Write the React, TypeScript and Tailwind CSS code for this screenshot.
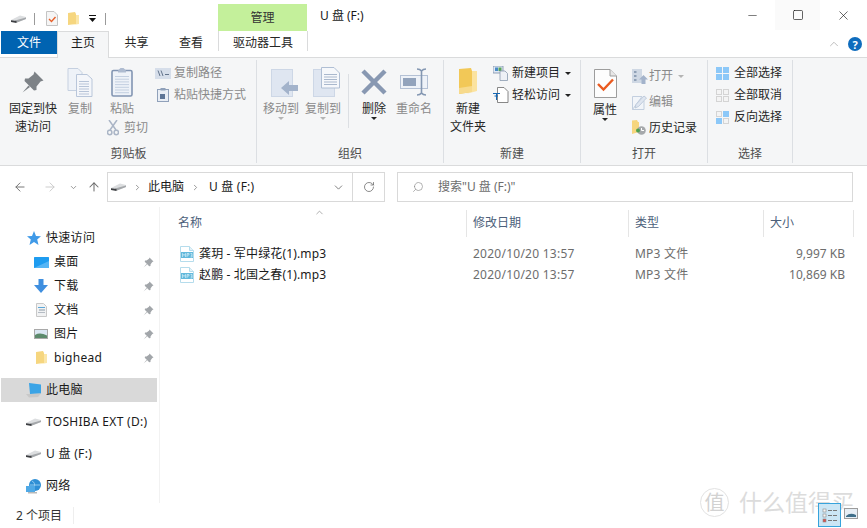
import type { ReactNode } from 'react'
import { Minus, Square, X, ChevronUp, ChevronDown, ChevronRight, ArrowLeft, ArrowRight, ArrowUp, RotateCw, Search } from 'lucide-react'

const FONT = "font-['Noto_Sans','Noto_Sans_CJK_SC',sans-serif]"

type IconProps = { className?: string }

function Drive({ className }: IconProps) {
  return (
    <svg className={className} width="15" height="8" viewBox="0 0 15 8">
      <path d="M0 5 L9 .5 L15 2 L15 4 L6 7.5 L0 6.5 Z" fill="#dcdee0" />
      <path d="M4 5.5 L15 2.6 L15 4 L6 7.5 L4 7.2 Z" fill="#a4a7aa" />
      <path d="M0 5.2 L5.5 6 L5.5 8 L0 7 Z" fill="#3d3f42" />
    </svg>
  )
}

function FolderSmall({ className }: IconProps) {
  return (
    <svg className={className} width="11" height="14" viewBox="0 0 11 14">
      <path d="M0 1 L7 0 L8 2 L8 12 L0 13 Z" fill="#f6d67f" />
      <path d="M8 3 L11 3 L11 12 L2 13.5 L8 12 Z" fill="#fbe6a8" />
    </svg>
  )
}

function Pin({ className, color = '#a2a6aa' }: IconProps & { color?: string }) {
  return (
    <svg className={className} width="11" height="11" viewBox="0 0 22 22">
      <path d="M13 1 L21 9 L18.5 10 L15 15 L15 18 L12.5 18.5 L3.5 9.5 L4 7 L7 7 L12 3.5 Z" fill={color} />
      <path d="M7 14 L1 21 L8 15 Z" fill={color} />
    </svg>
  )
}

function PinLarge() {
  return (
    <svg width="22" height="22" viewBox="0 0 22 22">
      <path d="M12.5 0.5 L21.5 9.5 L18.5 10.5 L14.5 15.5 L14.5 19 L12 19.5 L2.5 10 L3 7.5 L6.5 7.5 L11.5 3.5 Z" fill="#7d8287" />
      <path d="M6.5 14.5 L0.5 21.5 L8 16 Z" fill="#7d8287" />
    </svg>
  )
}

function Lines({ x, y, w, n, gap = 2.5, color = '#b7c4d8' }: { x: number; y: number; w: number; n: number; gap?: number; color?: string }) {
  return (
    <>
      {Array.from({ length: n }).map((_, i) => (
        <rect key={i} x={x} y={y + i * gap} width={w} height="1" fill={color} />
      ))}
    </>
  )
}

function CopyIcon() {
  return (
    <svg width="26" height="29" viewBox="0 0 26 29">
      <path d="M1 .5 H11 L15 4.5 V22.5 H1 Z" fill="#eef2f8" stroke="#c5d0e0" />
      <path d="M9.5 6.5 H20 L25 11 V28.5 H9.5 Z" fill="#f4f6fa" stroke="#b9c6da" />
      <Lines x={12} y={13} w={10} n={6} />
    </svg>
  )
}

function PasteIcon() {
  return (
    <svg width="22" height="30" viewBox="0 0 22 30">
      <rect x="1" y="3.5" width="20" height="25.5" rx="1.5" fill="#eef2f8" stroke="#8295b2" strokeWidth="1.6" />
      <path d="M7 3.5 L9.5 1 H12.5 L15 3.5 V5.5 H7 Z" fill="#aebbd0" />
      <Lines x={4} y={9} w={14} n={7} gap={2.7} color="#c3cfe0" />
    </svg>
  )
}

function ScissorsIcon() {
  return (
    <svg width="12" height="16" viewBox="0 0 12 16" fill="none" stroke="#aab5c6" strokeWidth="1.5">
      <path d="M2 0 L9 10 M10 0 L3 10" />
      <circle cx="2.7" cy="12.5" r="2.2" />
      <circle cx="9.3" cy="12.5" r="2.2" />
    </svg>
  )
}

function CopyPathIcon() {
  return (
    <svg width="16" height="11" viewBox="0 0 16 11">
      <rect width="16" height="11" fill="#d6deea" />
      <path d="M3 2.5 L5 8 M6 2.5 L8 8 M10 6.5 H14" stroke="#63748c" strokeWidth="1" fill="none" />
    </svg>
  )
}

function PasteShortcutIcon() {
  return (
    <svg width="12" height="14" viewBox="0 0 12 14">
      <rect x=".5" y="1.5" width="11" height="12" fill="#e9eef5" stroke="#90a1ba" />
      <rect x="3.5" y="0" width="5" height="2.5" fill="#90a1ba" />
      <rect x="3" y="6" width="5" height="5" fill="#5e7596" />
    </svg>
  )
}

function MoveIcon() {
  return (
    <svg width="27" height="30" viewBox="0 0 27 30">
      <rect x=".5" y="2.5" width="21" height="27" fill="#dfe6f1" stroke="#cdd7e6" />
      <path d="M10 21 L18 14 V18 H27 V24 H18 V28 Z" fill="#a3b3cb" />
    </svg>
  )
}

function CopyToIcon() {
  return (
    <svg width="27" height="30" viewBox="0 0 27 30">
      <rect x=".5" y="2.5" width="21" height="27" fill="#dfe6f1" stroke="#cdd7e6" />
      <path d="M8.5 .5 H21 L26.5 6 V21 H8.5 Z" fill="#f6f8fb" stroke="#b0bfd4" />
      <Lines x={11} y={7} w={13} n={5} color="#a9b8cd" />
    </svg>
  )
}

function RenameIcon() {
  return (
    <svg width="29" height="28" viewBox="0 0 29 28">
      <rect x=".5" y="7.5" width="27" height="13" fill="#eef2f8" stroke="#b4c1d5" />
      <rect x="3" y="10" width="13" height="8" fill="#92a3bc" />
      <path d="M17 1 Q20 1 21.5 3 Q23 1 26 1 M17 27 Q20 27 21.5 25 Q23 27 26 27 M21.5 3 V25" fill="none" stroke="#8497b2" strokeWidth="1.6" />
    </svg>
  )
}

function FolderLarge() {
  return (
    <svg width="20" height="28" viewBox="0 0 20 28">
      <path d="M1 1 L13 0 L14 3 L14 24 L1 26 Z" fill="#f2c857" />
      <path d="M14 3 L19 3 L19 23 L4 27 L14 24 Z" fill="#fbe3a0" />
      <path d="M1 20 L14 18 V24 L1 26 Z" fill="#f7da8c" />
    </svg>
  )
}

function NewItemIcon() {
  return (
    <svg width="15" height="15" viewBox="0 0 15 15">
      <rect x="0" y="0" width="10" height="7" fill="#dfe8f3" stroke="#7b8ea8" strokeWidth=".8" />
      <rect x="2" y="1.5" width="3" height="3.5" fill="#4a8ac6" />
      <rect x="5.5" y="1.5" width="3" height="3.5" fill="#5aa55a" />
      <path d="M7 5 H12 L14.5 7.5 V14.5 H7 Z" fill="#eef1f6" stroke="#8a9ab0" strokeWidth=".8" />
    </svg>
  )
}

function EasyAccessIcon() {
  return (
    <svg width="16" height="16" viewBox="0 0 16 16">
      <path d="M4.5 .5 H11 L15 4.5 V15.5 H4.5 Z" fill="#fff" stroke="#6b6b6b" strokeWidth=".8" />
      <path d="M0 6.5 H7 M1.5 9 H5 M3.5 6.5 V13" stroke="#1467b4" strokeWidth="1" fill="none" />
    </svg>
  )
}

function PropertiesIcon() {
  return (
    <svg width="23" height="29" viewBox="0 0 23 29">
      <path d="M.5 .5 H16 L22.5 7 V28.5 H.5 Z" fill="#fdfdfd" stroke="#9d9d9d" />
      <path d="M16 .5 V7 H22.5" fill="#e7e7e7" stroke="#9d9d9d" />
      <path d="M4 15 L9.5 20.5 L19 10.5" fill="none" stroke="#ea5a20" strokeWidth="2.4" />
    </svg>
  )
}

function OpenIcon() {
  return (
    <svg width="16" height="15" viewBox="0 0 16 15">
      <rect x="0" y="0" width="10" height="14" fill="#cfd8e4" />
      <rect x="2" y="2" width="2.5" height="2" fill="#8fa0b6" />
      <rect x="2" y="6" width="2.5" height="2" fill="#8fa0b6" />
      <rect x="2" y="10" width="2.5" height="2" fill="#8fa0b6" />
      <path d="M11.5 6 L16 10.5 H13.5 V15 H9.5 V10.5 H7 Z" fill="#a3b3cb" />
    </svg>
  )
}

function EditIcon() {
  return (
    <svg width="15" height="15" viewBox="0 0 15 15">
      <path d="M.5 1.5 H10 L.5 14.5 Z M.5 14.5 H12 V6" fill="#f2f5f9" stroke="#c3cfdf" />
      <path d="M3 13 L4 9.5 L12 1 L14.5 3 L6.5 11.5 Z" fill="#dfe6f0" stroke="#b5c3d6" strokeWidth=".8" />
    </svg>
  )
}

function HistoryIcon() {
  return (
    <svg width="14" height="15" viewBox="0 0 14 15">
      <path d="M0 .5 L5 0 L6 2 H7 V12 L0 14 Z" fill="#f6d67f" />
      <circle cx="9.5" cy="10.5" r="4.3" fill="#a5a8ab" />
      <path d="M9.5 8 V10.5 H12" stroke="#fff" fill="none" />
      <circle cx="6" cy="10.5" r="2" fill="#4fa04f" />
    </svg>
  )
}

function SelectGrid({ on }: { on: boolean[] }) {
  const pos = [
    [0, 0],
    [7, 0],
    [0, 7],
    [7, 7],
  ]
  return (
    <svg width="13" height="13" viewBox="0 0 13 13">
      {pos.map(([x, y], i) =>
        on[i] ? (
          <rect key={i} x={x} y={y} width="6" height="6" fill="#8cc8f8" />
        ) : (
          <rect key={i} x={x + 0.5} y={y + 0.5} width="5" height="5" fill="#f4f4f4" stroke="#d4d4d4" />
        ),
      )}
    </svg>
  )
}

function Caret({ grey, className }: IconProps & { grey?: boolean }) {
  return (
    <svg className={className} width="6" height="3" viewBox="0 0 6 3">
      <path d="M0 0 H6 L3 3 Z" fill={grey ? '#b4b4b4' : '#222'} />
    </svg>
  )
}

function MusicFile() {
  return (
    <svg width="14" height="16" viewBox="0 0 14 16">
      <path d="M.5 .5 H9.5 L13.5 4.5 V15.5 H.5 Z" fill="#fff" stroke="#b5dcec" />
      <path d="M9.5 .5 V4.5 H13.5" fill="#e4f2f8" stroke="#b5dcec" />
      <rect x="1" y="6" width="12" height="6" fill="#62b9dc" />
      <path d="M2.5 11 V7.5 L4 9.5 L5.5 7.5 V11 M7 11 V7.5 H9 V9 H7 M10.5 7.5 H12 V11 H10.5 M10.8 9.2 H12" stroke="#e8f6fb" strokeWidth=".6" fill="none" />
    </svg>
  )
}

function Star() {
  return (
    <svg width="14" height="14" viewBox="0 0 14 14">
      <path d="M7 0 L9 5 L14 5.3 L10.2 8.6 L11.5 14 L7 11 L2.5 14 L3.8 8.6 L0 5.3 L5 5 Z" fill="#3f9ae8" />
    </svg>
  )
}

function Desktop() {
  return (
    <svg width="15" height="11" viewBox="0 0 15 11">
      <rect width="15" height="11" rx=".5" fill="#1e9cf0" />
      <path d="M0 11 L15 4 V11 Z" fill="#55b5f5" />
    </svg>
  )
}

function Download() {
  return (
    <svg width="14" height="14" viewBox="0 0 14 14">
      <path d="M4.5 0 H9.5 V6 H14 L7 14 L0 6 H4.5 Z" fill="#3f8fdf" />
    </svg>
  )
}

function Documents() {
  return (
    <svg width="11" height="14" viewBox="0 0 11 14">
      <path d="M.5 .5 H7.5 L10.5 3.5 V13.5 H.5 Z" fill="#f1f2f3" stroke="#c8c8c8" />
      <rect x="2" y="4" width="7" height="1" fill="#5ba7d8" />
      <rect x="3" y="6.5" width="6" height="1" fill="#8d99a5" />
      <rect x="2" y="9" width="7" height="1" fill="#b5bcc4" />
    </svg>
  )
}

function Pictures() {
  return (
    <svg width="14" height="10" viewBox="0 0 14 10">
      <rect width="14" height="10" fill="#a9a9a9" />
      <rect x="1" y="1" width="12" height="8" fill="#dbe7f3" />
      <path d="M1 6 Q6 3 13 6.5 V9 H1 Z" fill="#5c8a6c" />
    </svg>
  )
}

function Laptop() {
  return (
    <svg width="16" height="15" viewBox="0 0 16 15">
      <path d="M3 0 L15 1.5 V10.5 L4 11 Z" fill="#3ba4e6" />
      <path d="M0 11 L4 11 L15 10.5 L12 14 L3 14.5 Z" fill="#c8c8c8" />
    </svg>
  )
}

function Network() {
  return (
    <svg width="16" height="15" viewBox="0 0 16 15">
      <circle cx="9" cy="6" r="6" fill="#2f8fd5" />
      <path d="M6 2 Q10 4 8 9 M4 6 H14" stroke="#a8d8f5" fill="none" strokeWidth=".8" />
      <rect x="0" y="7" width="9" height="6" fill="#4fa9e6" />
      <rect x="2" y="13" width="9" height="1.5" fill="#b9b9b9" />
    </svg>
  )
}

function Big({ w, icon, lines, off, caret, className = 'pt-[2px]' }: { w: number; icon: ReactNode; lines: string[]; off?: boolean; caret?: 'dark' | 'grey'; className?: string }) {
  return (
    <div className={`flex shrink-0 flex-col items-center ${className}`} style={{ width: w }}>
      <div className="flex h-[36px] w-full items-center justify-center">{icon}</div>
      {lines.map((l) => (
        <div key={l} className={`h-[18px] whitespace-nowrap leading-[18px] ${off ? 'text-[#8a8a8a]' : 'text-[#262626]'}`}>
          {l}
        </div>
      ))}
      {caret && <Caret grey={caret === 'grey'} className="mt-[-1px]" />}
    </div>
  )
}

function Small({ icon, text, off, h = 22, iconW = 19, caret }: { icon: ReactNode; text: string; off?: boolean; h?: number; iconW?: number; caret?: 'dark' | 'grey' }) {
  return (
    <div className="flex items-center whitespace-nowrap" style={{ height: h }}>
      <div className="flex shrink-0 items-center" style={{ width: iconW }}>
        {icon}
      </div>
      <span className={off ? 'text-[#8a8a8a]' : 'text-[#262626]'}>{text}</span>
      {caret && <Caret grey={caret === 'grey'} className="ml-[5px]" />}
    </div>
  )
}

function Group({ w, label, children }: { w: number; label: string; children: ReactNode }) {
  return (
    <div className="flex h-full shrink-0 flex-col border-r border-[#dcdfe3]" style={{ width: w }}>
      <div className="flex flex-1 pt-[2px]">{children}</div>
      <div className="h-5 text-center leading-[22px] text-[#4d4d4d]">{label}</div>
    </div>
  )
}

function NavRow({ icon, label, pin, indent = 'pl-[33px]', iconW = 20, className = '' }: { icon: ReactNode; label: string; pin?: boolean; indent?: string; iconW?: number; className?: string }) {
  return (
    <div className={`flex h-6 items-center ${indent} ${className}`}>
      <div className="flex shrink-0 items-center" style={{ width: iconW }}>
        {icon}
      </div>
      <span className="whitespace-nowrap tracking-[0.3px] text-[#1a1a1a]">{label}</span>
      {pin && <Pin className="ml-auto mr-[3px]" />}
    </div>
  )
}

function FileRow({ name, size }: { name: string; size: string }) {
  return (
    <div className="flex h-[21px] items-center">
      <div className="flex w-[313px] items-center pl-[20px]">
        <MusicFile />
        <span className="ml-[5px] whitespace-nowrap tracking-[0.15px] text-[#1a1a1a]">{name}</span>
      </div>
      <div className="w-[162px] whitespace-nowrap tracking-[0.25px] text-[#6d6d6d]">2020/10/20 13:57</div>
      <div className="w-[100px] whitespace-nowrap tracking-[0.2px] text-[#6d6d6d]">MP3 文件</div>
      <div className="w-[110px] text-right text-[#6d6d6d]">{size}</div>
    </div>
  )
}

function ColHead({ w, label, first }: { w: number; label: string; first?: boolean }) {
  return (
    <div className={`flex h-full shrink-0 items-center border-r border-[#e5e5e5] pb-[2px] text-[#4c607a] ${first ? 'pl-[18px]' : 'pl-[6px]'}`} style={{ width: w }}>
      {label}
    </div>
  )
}

export default function App() {
  return (
    <div className={`relative flex h-[528px] w-[867px] flex-col overflow-hidden bg-white text-[12px] ${FONT}`}>
      {/* title bar */}
      <div className="flex h-[31px] shrink-0">
        <div className="flex items-center pt-[6px]">
          <Drive className="ml-[11px]" />
          <div className="ml-[8px] h-3 w-px bg-[#9a9a9a]" />
          <svg className="ml-[11px]" width="12" height="15" viewBox="0 0 12 15">
            <path d="M.5 .5 H8 L11.5 4 V14.5 H.5 Z" fill="#f5f5f5" stroke="#c4c4c4" />
            <path d="M3 8 L5.5 10.5 L9.5 6" fill="none" stroke="#e8602a" strokeWidth="1.4" />
          </svg>
          <FolderSmall className="ml-[10px]" />
          <svg className="ml-[10px]" width="8" height="7" viewBox="0 0 8 7">
            <rect width="7" height="1" fill="#111" />
            <path d="M0 3 H7 L3.5 7 Z" fill="#111" />
          </svg>
          <div className="ml-[8px] h-3 w-px bg-[#9a9a9a]" />
        </div>
        <div className="ml-[112px] mt-[4px] flex h-[27px] w-[89px] items-center justify-center bg-[#c4f09b] text-[#333]">管理</div>
        <div className="ml-[13px] flex items-center text-[#1a1a1a]">U 盘 (F:)</div>
        <div className="ml-auto flex h-[30px] items-center">
          <div className="flex h-[30px] w-[46px] items-center justify-center">
            <Minus size={13} strokeWidth={1} color="#111" />
          </div>
          <div className="flex h-[30px] w-[45px] items-center justify-center bg-[#fafafa]">
            <Square size={12} strokeWidth={1.3} color="#111" />
          </div>
          <div className="flex h-[30px] w-[47px] items-center justify-center">
            <X size={15} strokeWidth={1} color="#111" />
          </div>
        </div>
      </div>

      {/* tabs */}
      <div className="relative z-10 flex h-[26px] shrink-0 pl-px">
        <div className="flex h-[23px] w-[56px] items-center justify-center bg-[#0063b1] text-white">文件</div>
        <div className="flex h-[27px] w-[52px] items-center justify-center border-x border-t border-[#dadbdc] bg-[#f5f6f7] pb-[4px] text-[#1a1a1a]">主页</div>
        <div className="flex h-[23px] w-[55px] items-center justify-center text-[#262626]">共享</div>
        <div className="flex h-[23px] w-[54px] items-center justify-center text-[#262626]">查看</div>
        <div className="h-[20px] w-[90px] border-x border-[#dadbdc]">
          <div className="flex h-[23px] items-center justify-center text-[#262626]">驱动器工具</div>
        </div>
        <div className="ml-auto flex h-[26px] items-center pr-[5px]">
          <ChevronUp size={14} color="#b5b5b5" strokeWidth={1.5} />
          <div className="ml-[7px] flex h-[14px] w-[14px] items-center justify-center rounded-full bg-[#0f6cbd] text-[11px] font-bold leading-none text-white">?</div>
        </div>
      </div>

      {/* ribbon */}
      <div className="flex h-[109px] shrink-0 border-y border-[#dadbdc] bg-[#f5f6f7] py-[2px] pl-px">
        <Group w={256} label="剪贴板">
          <Big w={48} icon={<PinLarge />} lines={['固定到快', '速访问']} className="ml-[8px] pt-[2px]" />
          <Big w={36} icon={<CopyIcon />} lines={['复制']} off className="ml-[5px] pt-[2px]" />
          <div className="ml-[6px] w-[36px] shrink-0">
            <Big w={36} icon={<PasteIcon />} lines={['粘贴']} off />
            <div className="ml-[3px] mt-[1px] flex w-[44px] items-center whitespace-nowrap text-[#8a8a8a]">
              <ScissorsIcon />
              <span className="ml-[5px]">剪切</span>
            </div>
          </div>
          <div className="ml-[15px]">
            <Small icon={<CopyPathIcon />} text="复制路径" off />
            <Small icon={<div className="pl-[2px]"><PasteShortcutIcon /></div>} text="粘贴快捷方式" off />
          </div>
        </Group>
        <Group w={187} label="组织">
          <Big w={36} icon={<div className="pl-[7px]"><MoveIcon /></div>} lines={['移动到']} off caret="grey" className="ml-[6px] pt-[2px]" />
          <Big w={36} icon={<div className="pl-[7px]"><CopyToIcon /></div>} lines={['复制到']} off caret="grey" className="ml-[6px] pt-[2px]" />
          <div className="ml-[7px] mt-[12px] h-[54px] w-px bg-[#dcdfe3]" />
          <Big
            w={36}
            icon={
              <svg width="26" height="26" viewBox="0 0 26 26">
                <path d="M2 2 L24 24 M24 2 L2 24" stroke="#8898b2" strokeWidth="4.5" />
              </svg>
            }
            lines={['删除']}
            caret="dark"
            className="ml-[7px] pt-[2px]"
          />
          <Big w={36} icon={<RenameIcon />} lines={['重命名']} off className="ml-[4px] pt-[2px]" />
        </Group>
        <Group w={137} label="新建">
          <Big w={48} icon={<FolderLarge />} lines={['新建', '文件夹']} className="pt-[2px]" />
          <div className="ml-[1px]">
            <Small icon={<NewItemIcon />} text="新建项目" caret="dark" />
            <Small icon={<EasyAccessIcon />} text="轻松访问" caret="dark" />
          </div>
        </Group>
        <Group w={127} label="打开">
          <Big w={36} icon={<PropertiesIcon />} lines={['属性']} caret="dark" className="ml-[6px] pt-[3px]" />
          <div className="ml-[9px]">
            <Small icon={<OpenIcon />} text="打开" off h={28} iconW={17} caret="grey" />
            <Small icon={<EditIcon />} text="编辑" off h={24} iconW={17} />
            <Small icon={<HistoryIcon />} text="历史记录" h={27} iconW={17} />
          </div>
        </Group>
        <Group w={85} label="选择">
          <div className="ml-[8px]">
            <Small icon={<SelectGrid on={[true, true, true, true]} />} text="全部选择" iconW={18} />
            <Small icon={<SelectGrid on={[false, false, false, false]} />} text="全部取消" iconW={18} />
            <Small icon={<SelectGrid on={[false, true, true, false]} />} text="反向选择" iconW={18} />
          </div>
        </Group>
      </div>

      {/* address row */}
      <div className="flex h-[41px] shrink-0 items-center pb-[5px] pt-[6px]">
        <div className="flex w-[107px] shrink-0 items-center pl-[13px]">
          <ArrowLeft size={14} color="#6f6f6f" strokeWidth={1.6} />
          <ArrowRight size={14} color="#c9c9c9" strokeWidth={1.6} className="ml-[16px]" />
          <ChevronDown size={9} color="#7a7a7a" strokeWidth={2} className="ml-[12px]" />
          <ArrowUp size={14} color="#6f6f6f" strokeWidth={1.8} className="ml-[9px]" />
        </div>
        <div className="flex h-[30px] w-[278px] shrink-0 items-center border border-[#d9d9d9] text-[#1a1a1a]">
          <Drive className="ml-[3px]" />
          <ChevronRight size={9} color="#7a7a7a" className="ml-[7px]" />
          <span className="ml-[6px]">此电脑</span>
          <ChevronRight size={9} color="#7a7a7a" className="ml-[7px]" />
          <span className="ml-[9px] tracking-[0.2px]">U 盘 (F:)</span>
          <ChevronDown size={13} color="#6f6f6f" strokeWidth={1.6} className="ml-auto mr-[7px]" />
          <div className="flex h-full w-[32px] items-center justify-center border-l border-[#d9d9d9]">
            <RotateCw size={12} color="#6f6f6f" strokeWidth={1.6} />
          </div>
        </div>
        <div className="ml-[12px] flex h-[30px] w-[456px] shrink-0 items-center border border-[#d9d9d9] pl-[14px] text-[#6d6d6d]">
          <Search size={12} color="#8a8a8a" strokeWidth={1.3} className="-scale-x-100" />
          <span className="ml-[14px]">搜索"U 盘 (F:)"</span>
        </div>
      </div>

      {/* main */}
      <div className="flex min-h-0 flex-1">
        <div className="h-full w-[160px] shrink-0 border-r border-[#f2f2f2] pl-px pr-[2px] pt-[19px]">
          <NavRow icon={<Star />} label="快速访问" indent="pl-[26px]" iconW={19} />
          <NavRow icon={<Desktop />} label="桌面" pin />
          <NavRow icon={<Download />} label="下载" pin />
          <NavRow icon={<div className="pl-[2px]"><Documents /></div>} label="文档" pin />
          <NavRow icon={<Pictures />} label="图片" pin />
          <NavRow icon={<div className="pl-[2px]"><FolderSmall /></div>} label="bighead" pin />
          <NavRow icon={<Laptop />} label="此电脑" indent="pl-[25px]" iconW={20} className="mt-[8px] bg-[#d9d9d9]" />
          <NavRow icon={<Drive />} label="TOSHIBA EXT (D:)" indent="pl-[25px]" iconW={20} className="mt-[8px]" />
          <NavRow icon={<Drive />} label="U 盘 (F:)" indent="pl-[25px]" iconW={20} className="mt-[8px]" />
          <NavRow icon={<Network />} label="网络" indent="pl-[25px]" iconW={20} className="mt-[8px]" />
        </div>
        <div className="relative min-w-0 flex-1">
          <ChevronUp size={11} color="#8a8a8a" strokeWidth={1.5} className="absolute left-[154px] top-0" />
          <div className="mt-[3px] flex h-[27px]">
            <ColHead w={307} label="名称" first />
            <ColHead w={162} label="修改日期" />
            <ColHead w={135} label="类型" />
            <ColHead w={90} label="大小" />
          </div>
          <div className="mt-[6px]">
            <FileRow name="龚玥 - 军中绿花(1).mp3" size="9,997 KB" />
            <FileRow name="赵鹏 - 北国之春(1).mp3" size="10,869 KB" />
          </div>
        </div>
      </div>

      {/* status bar */}
      <div className="flex h-[25px] shrink-0 items-center pl-[16px] text-[#333]">
        <span>2 个项目</span>
        <div className="ml-[11px] h-[17px] w-px bg-[#eeeeee]" />
      </div>

      {/* watermark + view switch sit over the status bar */}
      <div className="pointer-events-none absolute left-[700px] top-[488px] flex items-center text-[#dcdcdc]">
        <div className="flex h-[29px] w-[29px] items-center justify-center rounded-full border border-[#e2e2e2] text-[20px] leading-none text-[#d2d2d2]">值</div>
        <span className="ml-[10px] whitespace-nowrap text-[23px] leading-[29px]">什么值得买</span>
      </div>
      <div className="absolute left-[818px] top-[503px] flex items-end">
        <svg width="23" height="24" viewBox="0 0 23 24">
          <rect x=".5" y=".5" width="22" height="23" fill="#cbe6f5" stroke="#36a3dc" />
          <rect x="5" y="6" width="3" height="3" fill="#f5f5f5" stroke="#888" strokeWidth=".6" />
          <rect x="5" y="11" width="3" height="3" fill="#f5f5f5" stroke="#888" strokeWidth=".6" />
          <rect x="5" y="16" width="3" height="3" fill="#d9534f" stroke="#888" strokeWidth=".6" />
          <path d="M10 7.5 H19 M10 12.5 H19 M10 17.5 H19" stroke="#777" strokeDasharray="4 1" />
        </svg>
        <svg className="mb-[8px] ml-[3px]" width="14" height="11" viewBox="0 0 14 11">
          <rect x=".5" y=".5" width="13" height="10" fill="#e6eef5" stroke="#9c9c9c" />
          <path d="M2 8 Q6 4 12 7 V9 H2 Z" fill="#3f6f8a" />
        </svg>
      </div>
    </div>
  )
}
